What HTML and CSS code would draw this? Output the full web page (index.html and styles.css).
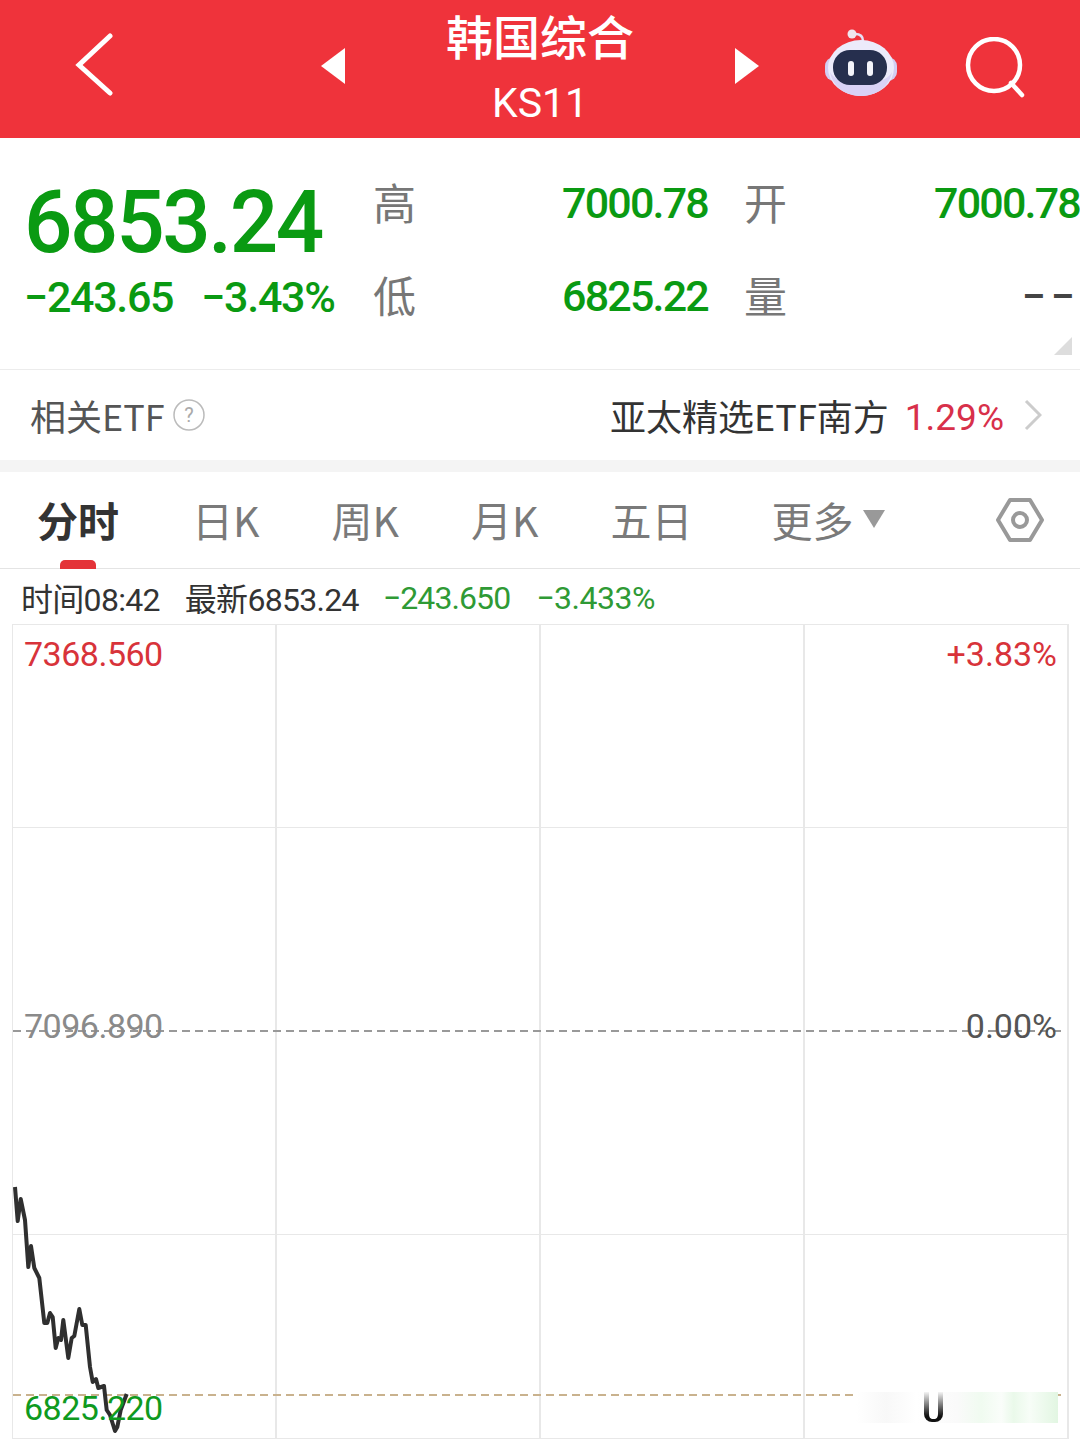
FILE: index.html
```html
<!DOCTYPE html>
<html lang="zh-CN">
<head>
    <meta charset="UTF-8">
    <meta name="viewport" content="width=device-width, initial-scale=1.0">
    <title>韩国综合</title>
    <link rel="stylesheet" href="styles.css">
</head>
<body>
    <!-- Barra superior -->
    <header class="topbar">
        <svg class="back" width="40" height="66" viewBox="0 0 40 66"><path d="M36 3 L5 32 L36 60" fill="none" stroke="#fff" stroke-width="5" stroke-linecap="round"/></svg>
        <svg class="arrow-left" width="26" height="36" viewBox="0 0 26 36"><path d="M25 0 V36 L1 18 Z" fill="#fff"/></svg>
        <div class="title">
            <div class="title-main">韩国综合</div>
            <div class="title-code">KS11</div>
        </div>
        <svg class="arrow-right" width="26" height="36" viewBox="0 0 26 36"><path d="M1 0 V36 L25 18 Z" fill="#fff"/></svg>
        <svg class="robot" width="76" height="70" viewBox="0 0 76 70">
            <path d="M32 6 C37 6 40 8 40 13" fill="none" stroke="#e6dff5" stroke-width="2.500"/>
            <circle cx="29" cy="6" r="4.500" fill="#f0e6ee"/>
            <rect x="2" y="29" width="72" height="24" rx="9" fill="#d3cdf2"/>
            <ellipse cx="38" cy="40" rx="33" ry="28" fill="#ecebfb"/>
            <path d="M7 44 C10 60 24 68 38 68 C52 68 66 60 69 44 C62 60 14 60 7 44 Z" fill="#d9d2f6"/>
            <rect x="10" y="22" width="54" height="35" rx="17" fill="#262f4e"/>
            <rect x="25" y="33" width="6" height="15" rx="3" fill="#f4f4fb"/>
            <rect x="44" y="33" width="6" height="15" rx="3" fill="#f4f4fb"/>
        </svg>
        <svg class="search" width="62" height="62" viewBox="0 0 62 62"><circle cx="29" cy="28" r="26" fill="none" stroke="#fff" stroke-width="4.500"/><path d="M46 46 L57 58" stroke="#fff" stroke-width="4.500" stroke-linecap="round"/></svg>
    </header>

    <!-- Cotización -->
    <section class="quote">
        <div class="quote-main">
            <div class="price">6853.24</div>
            <div class="change"><span>−243.65</span><span>−3.43%</span></div>
        </div>
        <div class="quote-grid">
            <span class="q-label">高</span><span class="q-num">7000.78</span>
            <span class="q-label">开</span><span class="q-num">7000.78</span>
            <span class="q-label">低</span><span class="q-num">6825.22</span>
            <span class="q-label">量</span><span class="q-num q-dark">−−</span>
        </div>
        <div class="corner"></div>
    </section>

    <!-- ETF -->
    <section class="etf">
        <div class="etf-left">
            <span>相关ETF</span>
            <svg width="32" height="32" viewBox="0 0 32 32"><circle cx="16" cy="16" r="15" fill="none" stroke="#bbb" stroke-width="1.500"/><text x="16" y="23" text-anchor="middle" class="help">?</text></svg>
        </div>
        <div class="etf-right">
            <span>亚太精选ETF南方</span>
            <span class="etf-pct">1.29%</span>
            <svg width="18" height="32" viewBox="0 0 18 32"><path d="M2 2 L16 16 L2 30" fill="none" stroke="#ccc" stroke-width="3"/></svg>
        </div>
    </section>
    <div class="band"></div>

    <!-- Pestañas -->
    <nav class="tabs">
        <span class="tab active">分时</span>
        <span class="tab">日K</span>
        <span class="tab">周K</span>
        <span class="tab">月K</span>
        <span class="tab">五日</span>
        <span class="tab tab-more">更多<i class="caret"></i></span>
        <svg class="gear" width="48" height="48" viewBox="0 0 48 48"><path d="M14 4 H34 L46 24 L34 44 H14 L2 24 Z" fill="none" stroke="#999" stroke-width="4" stroke-linejoin="round"/><circle cx="24" cy="24" r="7" fill="none" stroke="#999" stroke-width="4"/></svg>
    </nav>

    <div class="info">
        <span class="info-a">时间08:42</span>
        <span class="info-b">最新6853.24</span>
        <span class="info-c">−243.650</span>
        <span class="info-d">−3.433%</span>
    </div>

    <!-- Gráfico -->
    <div class="chart">
        <div class="cell"></div><div class="cell"></div><div class="cell"></div><div class="cell"></div>
        <div class="cell no-b"></div><div class="cell no-b"></div><div class="cell no-b"></div><div class="cell no-b"></div>
        <div class="cell"></div><div class="cell"></div><div class="cell"></div><div class="cell"></div>
        <div class="cell"></div><div class="cell"></div><div class="cell"></div><div class="cell"></div>

        <div class="dash dash-mid"></div>
        <div class="dash dash-low"></div>

        <svg class="line" width="140" height="270" viewBox="12 1170 140 270">
            <polyline fill="none" stroke="#2f2f2f" stroke-width="4" stroke-linejoin="round" points="15,1187 17.700,1221 20.700,1199 25,1220 28.300,1267 31,1246 34.300,1268 39.300,1278 44.300,1323 47.300,1323 50,1313 52.700,1317 55.700,1348 58.300,1338 61,1340 63.300,1320 68.300,1358 71.700,1338 74.300,1336 79.300,1309 82.300,1325 85.700,1325 90,1367 92.700,1382 96,1379 98.300,1388 104,1386 106.700,1410 110,1415 115,1431 117.300,1427 120.700,1410 126.700,1394"/>
        </svg>

        <span class="lbl lbl-top-l">7368.560</span>
        <span class="lbl lbl-top-r">+3.83%</span>
        <span class="lbl lbl-mid-l">7096.890</span>
        <span class="lbl lbl-mid-r">0.00%</span>
        <span class="lbl lbl-low-l">6825.220</span>

        <!-- Marca borrosa -->
        <div class="smudge"><div class="smudge-u"></div></div>
    </div>
</body>
</html>
```

FILE: styles.css
```css
* {
    box-sizing: border-box;
}
body {
    margin: 0;
    width: 1080px;
    height: 1446px;
    overflow: hidden;
    background: #fff;
    font-family: Roboto, "Noto Sans CJK SC", sans-serif;
}

/* Barra superior */
.topbar {
    height: 138px;
    background: #ef333b;
    color: #fff;
    display: flex;
    align-items: center;
    padding: 0 0 0 74px;
}
.back {
    margin-top: -6px;
}
.arrow-left {
    margin: 0 0 6px 206px;
}
.title {
    width: 388px;
    text-align: center;
    margin-top: -2px;
}
.title-main {
    font-family: "Noto Sans CJK SC", sans-serif;
    font-size: 47px;
    font-weight: 500;
    line-height: 62px;
    margin-top: -3px;
}
.title-code {
    font-size: 41px;
    line-height: 52px;
    margin-top: 11px;
}
.arrow-right {
    margin-bottom: 6px;
}
.robot {
    margin: -12px 0 0 63px;
}
.search {
    margin: -2px 0 0 66px;
}

/* Cotización */
.quote {
    height: 232px;
    border-bottom: 1px solid #ececec;
    position: relative;
    display: flex;
    padding-left: 26px;
}
.quote-main {
    width: 348px;
    color: #0a9a12;
}
.price {
    font-size: 88px;
    font-weight: 500;
    letter-spacing: -2.500px;
    line-height: 100px;
    margin: 34px 0 0 -2px;
    transform: scaleX(0.97);
    transform-origin: left;
}
.change {
    display: flex;
    gap: 28px;
    font-size: 43px;
    font-weight: 500;
    letter-spacing: -1.300px;
    line-height: 50px;
    margin: 0 0 0 -2px;
}
.quote-grid {
    display: grid;
    grid-template-columns: 188px 183px 189px 144px;
    grid-template-rows: 93px 93px;
    margin-top: 18px;
    align-items: center;
}
.q-label {
    font-family: "Noto Sans CJK SC", sans-serif;
    font-size: 43px;
    font-weight: 400;
    color: #777;
    margin: -4px 0 0 -1px;
}
.q-num {
    font-size: 43px;
    font-weight: 500;
    letter-spacing: -1.800px;
    color: #0a9a12;
    white-space: nowrap;
}
.q-dark {
    color: #444;
    text-align: right;
    letter-spacing: 5px;
    margin-right: -2px;
}
.corner {
    position: absolute;
    right: 8px;
    bottom: 14px;
    width: 0;
    height: 0;
    border-left: 18px solid transparent;
    border-bottom: 18px solid #ddd;
}

/* ETF */
.etf {
    height: 90px;
    display: flex;
    align-items: center;
    justify-content: space-between;
    padding: 0 38px 0 30px;
    font-family: "Noto Sans CJK SC", sans-serif;
    font-size: 36px;
    color: #333;
}
.etf-left, .etf-right {
    display: flex;
    align-items: center;
}
.etf-left {
    gap: 8px;
    color: #555;
}
.help {
    font-family: Roboto, sans-serif;
    font-size: 20px;
    fill: #aaa;
}
.etf-pct {
    margin: 4px 20px 0 16px;
    font-family: Roboto, sans-serif;
    font-size: 37px;
    color: #d8304a;
}
.band {
    height: 12px;
    background: #f4f4f4;
}

/* Pestañas */
.tabs {
    height: 97px;
    border-bottom: 1px solid #e4e4e4;
    display: flex;
    align-items: center;
    gap: 72px;
    padding: 0 36px 0 37px;
    font-family: "Noto Sans CJK SC", sans-serif;
    font-size: 41px;
    color: #7a7a7a;
}
.tab {
    position: relative;
    margin-top: -2px;
}
.active {
    font-weight: 700;
    color: #333;
    margin-right: 1px;
}
.active::after {
    content: "";
    position: absolute;
    left: 23px;
    bottom: -20px;
    width: 36px;
    height: 9px;
    border-radius: 5px 5px 0 0;
    background: #e43338;
}
.tab-more {
    margin-left: 7px;
    display: flex;
    align-items: center;
}
.caret {
    width: 0;
    height: 0;
    margin-left: 9px;
    border-left: 11px solid transparent;
    border-right: 11px solid transparent;
    border-top: 18px solid #999;
}
.gear {
    margin-left: auto;
}

.info {
    height: 55px;
    display: flex;
    align-items: center;
    padding-left: 21px;
    font-size: 32px;
    letter-spacing: -0.700px;
    color: #333;
}
.info-b {
    margin-left: 25px;
}
.info-c {
    margin: 2px 0 0 24px;
    color: #2f9a35;
    letter-spacing: -0.900px;
}
.info-d {
    margin: 2px 0 0 26px;
    color: #2f9a35;
    letter-spacing: -0.500px;
}

/* Gráfico */
.chart {
    position: relative;
    margin-left: 12px;
    width: 1057px;
    height: 815px;
    display: grid;
    grid-template-columns: repeat(4, 264px);
    grid-template-rows: 203px 203px 204px 204px;
    border-top: 1px solid #e8e8e8;
    border-left: 1px solid #e8e8e8;
}
.cell {
    border-right: 2px solid #e8e8e8;
    border-bottom: 1px solid #e8e8e8;
}
.no-b {
    border-bottom: none;
}
.dash {
    position: absolute;
    left: 0;
    width: 1050px;
    height: 2px;
    background: repeating-linear-gradient(90deg, #999 0 8px, transparent 8px 13px);
}
.dash-mid {
    top: 405px;
}
.dash-low {
    top: 769px;
    background: repeating-linear-gradient(90deg, #c9b28e 0 8px, transparent 8px 13px);
}
.line {
    position: absolute;
    left: -1px;
    top: 545px;
}
.lbl {
    position: absolute;
    font-size: 34px;
    line-height: 40px;
}
.lbl-top-l, .lbl-mid-l, .lbl-low-l {
    letter-spacing: -0.500px;
    left: 11px;
}
.lbl-top-l {
    top: 9px;
    color: #d8333a;
}
.lbl-top-r {
    right: 12px;
    top: 9px;
    color: #d8333a;
}
.lbl-mid-l {
    top: 381px;
    color: #8a8a8a;
}
.lbl-mid-r {
    right: 12px;
    top: 381px;
    color: #555;
}
.lbl-low-l {
    top: 763px;
    color: #0f9a1f;
}
.smudge {
    position: absolute;
    left: 843px;
    top: 767px;
    width: 202px;
    height: 31px;
    background: linear-gradient(90deg, #fff, #f8f8f8 15%, #fff 30%, #fafafa 50%, #f0fbf0 62%, #fafdfa 72%, #eaf9ea 78%, #f7fdf7 86%, #e2f6e2);
}
.smudge-u {
    position: absolute;
    left: 68px;
    top: 0;
    width: 19px;
    height: 30px;
    border: 5px solid transparent;
    border-top: none;
    border-bottom-width: 3px;
    border-radius: 0 0 8px 8px;
    background: linear-gradient(#fff, #fff) padding-box, linear-gradient(#f4f4f4, #111 80%) border-box;
}
```
